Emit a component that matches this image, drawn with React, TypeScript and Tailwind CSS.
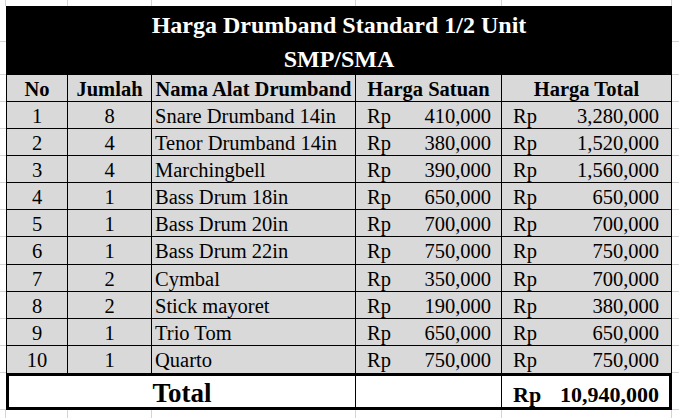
import React from "react";

const rows = [
  ["1", "8", "Snare Drumband 14in", "410,000", "3,280,000"],
  ["2", "4", "Tenor Drumband 14in", "380,000", "1,520,000"],
  ["3", "4", "Marchingbell", "390,000", "1,560,000"],
  ["4", "1", "Bass Drum 18in", "650,000", "650,000"],
  ["5", "1", "Bass Drum 20in", "700,000", "700,000"],
  ["6", "1", "Bass Drum 22in", "750,000", "750,000"],
  ["7", "2", "Cymbal", "350,000", "700,000"],
  ["8", "2", "Stick mayoret", "190,000", "380,000"],
  ["9", "1", "Trio Tom", "650,000", "650,000"],
  ["10", "1", "Quarto", "750,000", "750,000"],
];

function MarginCol({ w }: { w: string }) {
  return (
    <div className={`flex flex-col ${w}`}>
      <div className="h-[36px] border-b border-[#d4d4d4]" />
      <div className="h-[33px] border-b border-[#d4d4d4]" />
      <div className="h-[27px] border-b border-[#d4d4d4]" />
      {rows.map((r) => (
        <div key={r[0]} className="h-[27.1px] border-b border-[#d4d4d4]" />
      ))}
      <div className="h-[37px] border-b border-[#d4d4d4]" />
    </div>
  );
}

function MarginRow({ h }: { h: string }) {
  return (
    <div className={`flex ${h}`}>
      <div className="w-[6px] border-r border-[#d4d4d4]" />
      <div className="w-[62px] border-r border-[#d4d4d4]" />
      <div className="w-[84px] border-r border-[#d4d4d4]" />
      <div className="w-[204px] border-r border-[#d4d4d4]" />
      <div className="w-[146px] border-r border-[#d4d4d4]" />
      <div className="w-[170px] border-r border-[#d4d4d4]" />
      <div className="w-[7px]" />
    </div>
  );
}

export default function App() {
  return (
    <div className="w-[679px] h-[418px] bg-white overflow-hidden font-['Liberation_Serif',serif] text-black">
      <MarginRow h="h-[6px]" />
      <div className="flex">
        <MarginCol w="w-[6px]" />
        <div className="w-[666px] flex flex-col">
          <div className="h-[69px] bg-black text-white font-bold text-[24px] leading-[34px] pt-[2px] text-center">
            <div>Harga Drumband Standard 1/2 Unit</div>
            <div>SMP/SMA</div>
          </div>
          <div className="flex h-[27px] bg-[#d9d9d9] border-b border-black font-bold text-[20.5px] leading-[25px]">
            <div className="w-[62px] border-l border-r border-black text-center pt-[2px]">No</div>
            <div className="w-[84px] border-r border-black text-center pt-[2px] whitespace-nowrap">Jumlah</div>
            <div className="w-[204px] border-r border-black text-center pt-[2px] whitespace-nowrap">Nama Alat Drumband</div>
            <div className="w-[146px] border-r border-black text-center pt-[2px] whitespace-nowrap">Harga Satuan</div>
            <div className="w-[170px] border-r border-black text-center pt-[2px] whitespace-nowrap">Harga Total</div>
          </div>
          {rows.map((r, i) => (
            <div
              key={r[0]}
              className={`flex h-[27.1px] bg-[#d9d9d9] text-[20.5px] leading-[25px] ${i < rows.length - 1 ? "border-b border-black" : ""}`}
            >
              <div className="w-[62px] border-l border-r border-black text-center pt-[2px]">{r[0]}</div>
              <div className="w-[84px] border-r border-black text-center pt-[2px]">{r[1]}</div>
              <div className="w-[204px] border-r border-black pl-[3px] pt-[2px] whitespace-nowrap">{r[2]}</div>
              <div className="w-[146px] border-r border-black pl-[11px] pr-[10px] pt-[2px] flex justify-between">
                <span>Rp</span>
                <span>{r[3]}</span>
              </div>
              <div className="w-[170px] border-r border-black pl-[11px] pr-[12px] pt-[2px] flex justify-between">
                <span>Rp</span>
                <span>{r[4]}</span>
              </div>
            </div>
          ))}
          <div className="flex h-[37px] bg-white border-t-[3px] border-b-[3px] border-black font-bold">
            <div className="w-[350px] border-l-[3px] border-r border-black text-center text-[27px] leading-[31px] pt-[2px]">
              Total
            </div>
            <div className="w-[146px] border-r border-black" />
            <div className="w-[170px] border-r-[3px] border-black pl-[11px] pr-[10px] pt-[3px] flex justify-between text-[22px] leading-[31px]">
              <span>Rp</span>
              <span>10,940,000</span>
            </div>
          </div>
        </div>
        <MarginCol w="w-[7px]" />
      </div>
      <MarginRow h="h-[8px]" />
    </div>
  );
}
